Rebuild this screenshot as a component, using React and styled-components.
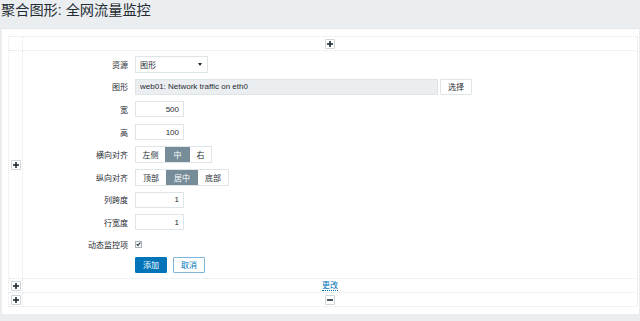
import React from "react";
import styled, { createGlobalStyle } from "styled-components";

const Global = createGlobalStyle`
  html, body { margin: 0; padding: 0; background: #ebeef0; }
  body { font-family: "Liberation Sans", Arial, "Noto Sans CJK SC", sans-serif; color: #1f2c33; }
  * { box-sizing: border-box; }
`;

const Header = styled.div`
  height: 29px;
  padding: 0 0 0 1px;
  border-bottom: 1px solid #e4e8eb;
`;
const Title = styled.h1`
  margin: 0;
  font-size: 14.2px;
  font-weight: normal;
  line-height: 20px;
  color: #1f2c33;
  font-family: "Liberation Sans", "Noto Sans CJK SC", sans-serif;
`;

const Panel = styled.div`
  background: #fff;
  margin: 0 1px 0 2px;
  padding: 7px 1px 7px 6px;
`;

const line = "1px dotted #e3e7ea";

const Table = styled.div`
  display: grid;
  grid-template-columns: 14px 1fr;
  grid-template-rows: 14px 228px 14px 14px;
  border-top: ${line};
  border-left: ${line};
`;

const Cell = styled.div`
  border-right: ${line};
  border-bottom: ${line};
  display: flex;
  align-items: ${(p) => (p.$top ? "flex-start" : "center")};
  justify-content: center;
  min-width: 0;
`;

const MiniBtn = styled.span`
  width: 10px;
  height: 10px;
  border: 1px solid #cfd6da;
  border-radius: 1px;
  background: #fff;
  display: inline-flex;
  align-items: center;
  justify-content: center;
`;

const Sign = ({ minus }) => (
  <MiniBtn>
    <svg width="6" height="6" viewBox="0 0 6 6">
      <rect x="0" y="2.2" width="6" height="1.6" fill="#1f2c33" />
      {!minus && <rect x="2.2" y="0" width="1.6" height="6" fill="#1f2c33" />}
    </svg>
  </MiniBtn>
);

const Form = styled.div`
  width: 100%;
  padding-top: 2px;
  display: flex;
  flex-direction: column;
`;

const Row = styled.div`
  display: grid;
  grid-template-columns: 105px auto;
  column-gap: 7px;
  align-items: center;
  height: ${(p) => p.$h || 22.6}px;
`;

const Label = styled.div`
  text-align: right;
  font-size: 8px;
  color: #1f2c33;
`;

const Controls = styled.div`
  display: flex;
  align-items: center;
  gap: 2px;
`;

const Select = styled.div`
  width: 73px;
  height: 17px;
  border: 1px solid #dfe4e7;
  display: flex;
  align-items: center;
  justify-content: space-between;
  padding: 0 5px 0 4px;
  font-size: 8px;
`;

const Caret = styled.span`
  width: 0;
  height: 0;
  border-left: 2.5px solid transparent;
  border-right: 2.5px solid transparent;
  border-top: 3.5px solid #1f2c33;
`;

const Input = styled.div`
  width: ${(p) => p.$w}px;
  height: 16px;
  border: 1px solid #dfe4e7;
  background: ${(p) => (p.$ro ? "#ebeef0" : "#fff")};
  font-size: 8px;
  display: flex;
  align-items: center;
  justify-content: ${(p) => (p.$right ? "flex-end" : "flex-start")};
  padding: 0 4px;
  color: #1f2c33;
`;

const Btn = styled.div`
  height: 16px;
  padding: 0 6px;
  border: 1px solid ${(p) => (p.$primary ? "#0275b8" : p.$blue ? "#7fb6db" : "#dfe4e7")};
  background: ${(p) => (p.$primary ? "#0275b8" : "#fff")};
  color: ${(p) => (p.$primary ? "#fff" : p.$blue ? "#0275b8" : "#1f2c33")};
  font-size: 8px;
  display: flex;
  align-items: center;
  justify-content: center;
  min-width: ${(p) => p.$min || 0}px;
  border-radius: 1px;
`;

const Seg = styled.div`
  display: flex;
  height: 17px;
  border: 1px solid #dfe4e7;
`;

const SegItem = styled.div`
  width: ${(p) => p.$w}px;
  font-size: 8px;
  display: flex;
  align-items: center;
  justify-content: center;
  background: ${(p) => (p.$on ? "#768d99" : "#fff")};
  color: ${(p) => (p.$on ? "#fff" : "#1f2c33")};
`;

const Check = styled.span`
  width: 7px;
  height: 7px;
  border: 1px solid #aab4ba;
  background: #f4f6f7;
  display: inline-flex;
  align-items: center;
  justify-content: center;
`;

const ButtonsRow = styled.div`
  display: flex;
  gap: 6px;
  margin-left: 112px;
  margin-top: 2px;
`;

const Link = styled.span`
  font-size: 8px;
  color: #0275b8;
  border-bottom: 1px dotted #0275b8;
  line-height: 9px;
`;

export default function App() {
  return (
    <>
      <Global />
      <Header>
        <Title>聚合图形: 全网流量监控</Title>
      </Header>
      <Panel>
        <Table>
          <Cell />
          <Cell><Sign /></Cell>
          <Cell><Sign /></Cell>
          <Cell $top>
            <Form>
              <Row>
                <Label>资源</Label>
                <Controls>
                  <Select>图形<Caret /></Select>
                </Controls>
              </Row>
              <Row>
                <Label>图形</Label>
                <Controls>
                  <Input $w={303} $ro>web01: Network traffic on eth0</Input>
                  <Btn $min={32}>选择</Btn>
                </Controls>
              </Row>
              <Row>
                <Label>宽</Label>
                <Controls><Input $w={49} $right>500</Input></Controls>
              </Row>
              <Row>
                <Label>高</Label>
                <Controls><Input $w={49} $right>100</Input></Controls>
              </Row>
              <Row>
                <Label>横向对齐</Label>
                <Controls>
                  <Seg>
                    <SegItem $w={29}>左侧</SegItem>
                    <SegItem $w={25} $on>中</SegItem>
                    <SegItem $w={21}>右</SegItem>
                  </Seg>
                </Controls>
              </Row>
              <Row>
                <Label>纵向对齐</Label>
                <Controls>
                  <Seg>
                    <SegItem $w={30}>顶部</SegItem>
                    <SegItem $w={32} $on>居中</SegItem>
                    <SegItem $w={30}>底部</SegItem>
                  </Seg>
                </Controls>
              </Row>
              <Row>
                <Label>列跨度</Label>
                <Controls><Input $w={49} $right>1</Input></Controls>
              </Row>
              <Row>
                <Label>行宽度</Label>
                <Controls><Input $w={49} $right>1</Input></Controls>
              </Row>
              <Row $h={21}>
                <Label>动态监控项</Label>
                <Controls>
                  <Check>
                    <svg width="6" height="6" viewBox="0 0 6 6">
                      <path d="M0.8 3.2 L2.4 4.8 L5.3 1.2" stroke="#1f2c33" strokeWidth="1.3" fill="none" />
                    </svg>
                  </Check>
                </Controls>
              </Row>
              <ButtonsRow>
                <Btn $primary $min={32}>添加</Btn>
                <Btn $blue $min={32}>取消</Btn>
              </ButtonsRow>
            </Form>
          </Cell>
          <Cell><Sign /></Cell>
          <Cell><Link>更改</Link></Cell>
          <Cell><Sign /></Cell>
          <Cell><Sign minus /></Cell>
        </Table>
      </Panel>
    </>
  );
}
